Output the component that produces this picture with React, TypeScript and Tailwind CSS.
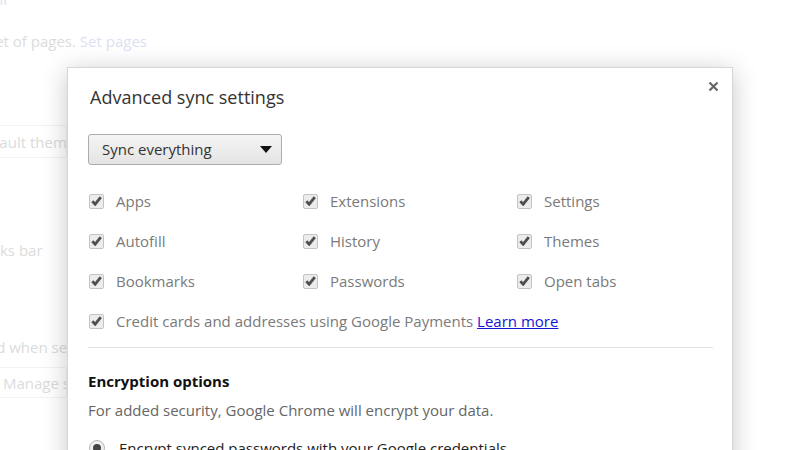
import React from "react"

const font = { fontFamily: '"Open Sans", "Noto Sans", sans-serif' }

type Item = { label: string }

const rows: Item[][] = [
  [{ label: "Apps" }, { label: "Extensions" }, { label: "Settings" }],
  [{ label: "Autofill" }, { label: "History" }, { label: "Themes" }],
  [{ label: "Bookmarks" }, { label: "Passwords" }, { label: "Open tabs" }],
]

function Check() {
  return (
    <span className="w-[15px] h-[15px] shrink-0 rounded-[2px] border border-[#c4c4c4] bg-[#ececec] flex items-center justify-center">
      <svg width="11" height="10" viewBox="0 0 11 10">
        <path d="M1.3 5.2 L4.2 8.2 L9.8 1.2" fill="none" stroke="#4f4f4f" strokeWidth="2.8" />
      </svg>
    </span>
  )
}

function CheckItem({ label }: Item) {
  return (
    <div className="flex items-center gap-[12px] h-[20px]">
      <Check />
      <span className="text-[15px] text-[#7a7a7a]">{label}</span>
    </div>
  )
}

export default function App() {
  return (
    <div className="relative w-[800px] h-[450px] overflow-hidden bg-white" style={font}>
      {/* page behind the overlay */}
      <div className="text-[15px] leading-[20px] text-[#c4c4c4] whitespace-nowrap">
        <div className="h-[20px] -mt-[11px] -ml-[10px] text-[#c7cdf0]">All</div>
        <div className="mt-[22px] -ml-[12px]">
          set of pages. <span className="text-[#c3cbee]">Set pages</span>
        </div>
        <div className="mt-[74px] -ml-[32px] w-[99px] h-[33px] border border-[#ececec] rounded-[2px] flex items-center pl-[6px] overflow-hidden">
          Default theme
        </div>
        <div className="mt-[82px] -ml-[64px]">Bookmarks bar</div>
        <div className="mt-[77px] -ml-[50px]">Allowed when sent</div>
        <div className="mt-[10px] -ml-[10px] w-[77px] h-[31px] border border-[#ececec] rounded-[2px] flex items-center pl-[12px] overflow-hidden">
          Manage settings
        </div>
      </div>
      <div className="absolute inset-0 bg-white/40" />

      {/* dialog */}
      <div className="absolute left-[67px] top-[67px] w-[666px] h-[420px] bg-white border border-[#d6d6d6] shadow-[0_4px_24px_rgba(0,0,0,0.22)]">
        <div className="flex items-start justify-between pl-[22px] pr-[13px] pt-[16px]">
          <h1 className="text-[18px] text-[#333]">Advanced sync settings</h1>
          <svg className="-mt-[3px]" width="11" height="11" viewBox="0 0 11 11">
            <path d="M1.5 1.5 L9.5 9.5 M9.5 1.5 L1.5 9.5" stroke="#666" strokeWidth="2.2" />
          </svg>
        </div>

        <div className="pl-[20px] pr-[19px]">
          <div className="mt-[23px] w-[194px] h-[31px] rounded-[3px] border border-[#adadad] bg-gradient-to-b from-[#f4f4f4] to-[#e4e4e4] flex items-center justify-between pl-[13px] pr-[9px]">
            <span className="text-[15px] text-[#333]">Sync everything</span>
            <svg width="12" height="7" viewBox="0 0 12 7">
              <path d="M0 0 L12 0 L6 7 Z" fill="#111" />
            </svg>
          </div>

          <div className="mt-[26px] flex flex-col gap-[20px] pl-[1px]">
            {rows.map((row, i) => (
              <div key={i} className="grid grid-cols-[214px_214px_1fr]">
                {row.map((it) => (
                  <CheckItem key={it.label} label={it.label} />
                ))}
              </div>
            ))}
            <div className="flex items-center gap-[12px] h-[20px]">
              <Check />
              <span className="text-[15px] text-[#7a7a7a]">
                Credit cards and addresses using Google Payments{" "}
                <a className="text-[#1515d6] underline">Learn more</a>
              </span>
            </div>
          </div>

          <div className="mt-[16px] h-px bg-[#e3e3e3]" />

          <h2 className="mt-[22px] text-[15px] font-bold text-[#111]">Encryption options</h2>
          <p className="mt-[6px] text-[15px] text-[#666]">
            For added security, Google Chrome will encrypt your data.
          </p>
          <div className="mt-[16px] flex items-center gap-[14px] pl-[1px]">
            <span className="w-[16px] h-[16px] rounded-full border border-[#b5b5b5] bg-[#f0f0f0] flex items-center justify-center">
              <span className="w-[8px] h-[8px] rounded-full bg-[#444]" />
            </span>
            <span className="text-[15px] text-[#222]">Encrypt synced passwords with your Google credentials</span>
          </div>
        </div>
      </div>
    </div>
  )
}
